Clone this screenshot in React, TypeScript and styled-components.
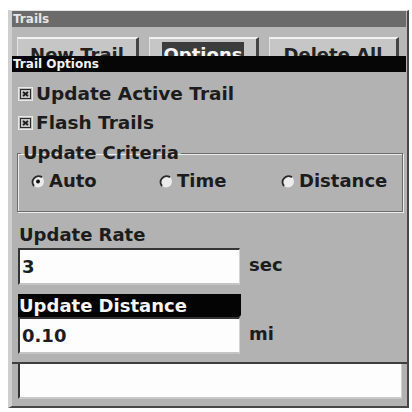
import React from 'react';
import styled, { createGlobalStyle } from 'styled-components';

const GlobalStyle = createGlobalStyle`
  body {
    margin: 0;
    background: #ffffff;
    font-family: "DejaVu Sans", "Liberation Sans", sans-serif;
  }
`;

const Dialog = styled.div`
  margin: 10px 0 0 8px;
  width: 401px;
  box-sizing: border-box;
  background: #b2b2b2;
  border-top: 1px solid #e4e4e4;
  border-left: 4px solid #cfcfcf;
  border-right: 2px solid #474747;
  border-bottom: 2px solid #474747;
  display: flex;
  flex-direction: column;
`;

const TitleBar = styled.div<{ $dark?: boolean }>`
  height: 16px;
  line-height: 16px;
  padding-left: 1px;
  margin-right: 1px;
  background: ${(p) => (p.$dark ? '#060606' : '#6b6b6b')};
  color: ${(p) => (p.$dark ? '#f2f2f2' : '#e6e6e6')};
  font-size: 12px;
  font-weight: bold;
`;

const ButtonRow = styled.div`
  height: 29px;
  box-sizing: border-box;
  padding: 10px 0 0 5px;
  overflow: hidden;
  display: flex;
  gap: 10px;
  background: #b8b8b8;
`;

const TabButton = styled.div<{ $w: number }>`
  width: ${(p) => p.$w}px;
  height: 34px;
  flex: none;
  box-sizing: border-box;
  padding-top: 3px;
  background: #c6c6c6;
  border-top: 2px solid #f2f2f2;
  border-left: 1px solid #e2e2e2;
  border-right: 3px solid #444444;
  text-align: center;
  font-size: 18px;
  font-weight: bold;
  line-height: 26px;
  color: #222222;
`;

const Selected = styled.span`
  display: inline-block;
  padding: 0 2px;
  background: #3c3c3c;
  color: #f4f4f4;
`;

const Body = styled.div`
  height: 290px;
  box-sizing: border-box;
  padding: 7px 5px 0 6px;
  display: flex;
  flex-direction: column;
  color: #1c1c1c;
  font-size: 18px;
  font-weight: bold;
`;

const CheckRow = styled.div`
  height: 29px;
  display: flex;
  align-items: center;
  gap: 3px;
  font-size: 18.5px;
`;

const Group = styled.fieldset`
  margin: 5px -1px 0 -1px;
  padding: 6px 0 19px 3px;
  min-width: 0;
  border: 1px solid #6c6c6c;
  box-shadow: inset 1px 1px 0 #ececec, 1px 1px 0 #ececec;
`;

const Legend = styled.legend`
  padding: 0 2px;
  line-height: 22px;
`;

const RadioRow = styled.div`
  display: grid;
  grid-template-columns: 128px 122px auto;
  padding-left: 9px;
`;

const RadioOption = styled.div`
  display: flex;
  align-items: center;
  gap: 3px;
  line-height: 22px;
`;

const Label = styled.div<{ $active?: boolean }>`
  width: 223px;
  box-sizing: border-box;
  margin-top: ${(p) => (p.$active ? 9 : 12)}px;
  padding-left: 1px;
  line-height: ${(p) => (p.$active ? 23 : 22)}px;
  background: ${(p) => (p.$active ? '#040404' : 'transparent')};
  color: ${(p) => (p.$active ? '#f6f6f6' : 'inherit')};
  border-radius: 0 0 3px 0;
`;

const FieldRow = styled.div<{ $gap?: number }>`
  margin-top: ${(p) => p.$gap ?? 0}px;
  display: flex;
  align-items: center;
`;

const Field = styled.div`
  width: 222px;
  height: 37px;
  box-sizing: border-box;
  padding-left: 2px;
  display: flex;
  align-items: center;
  background: #fdfdfd;
  border-top: 2px solid #343434;
  border-left: 2px solid #343434;
  border-bottom: 2px solid #c4c4c4;
  border-right: 1px solid #d4d4d4;
`;

const Unit = styled.span`
  margin-left: 9px;
  padding-bottom: 4px;
`;

const Footer = styled.div`
  border-top: 2px solid #3e3e3e;
  padding: 0 5px 7px 6px;
`;

const StatusBox = styled.div`
  height: 35px;
  box-sizing: border-box;
  background: #fdfdfd;
  border-left: 2px solid #333333;
  border-bottom: 2px solid #c8c8c8;
  border-right: 1px solid #d0d0d0;
`;

const CheckBox = () => (
  <svg width="15" height="14" viewBox="0 0 15 14">
    <rect x="0.5" y="0.5" width="14" height="13" fill="#bdbdbd" stroke="#e8e8e8" />
    <rect x="2.5" y="2.5" width="10" height="9" fill="#c2c2c2" stroke="#2a2a2a" />
    <path d="M5 5 L10 9 M10 5 L5 9" stroke="#1a1a1a" strokeWidth="1.8" />
  </svg>
);

const Radio = ({ on }: { on?: boolean }) => (
  <svg width="16" height="15" viewBox="0 0 16 15">
    <circle cx="8" cy="7.5" r="6" fill="#ececec" />
    <path d="M12 3.2 A6 6 0 0 0 4 12" fill="none" stroke="#2a2a2a" strokeWidth="2" />
    {on && <circle cx="8" cy="7.5" r="2" fill="#111111" />}
  </svg>
);

const App = () => {
  return (
    <>
      <GlobalStyle />
      <Dialog>
        <TitleBar>Trails</TitleBar>
        <ButtonRow>
          <TabButton $w={122}>New Trail</TabButton>
          <TabButton $w={110}>
            <Selected>Options</Selected>
          </TabButton>
          <TabButton $w={130}>Delete All</TabButton>
        </ButtonRow>
        <TitleBar $dark>Trail Options</TitleBar>
        <Body>
          <CheckRow>
            <CheckBox />
            Update Active Trail
          </CheckRow>
          <CheckRow>
            <CheckBox />
            Flash Trails
          </CheckRow>
          <Group>
            <Legend>Update Criteria</Legend>
            <RadioRow>
              <RadioOption>
                <Radio on />
                Auto
              </RadioOption>
              <RadioOption>
                <Radio />
                Time
              </RadioOption>
              <RadioOption>
                <Radio />
                Distance
              </RadioOption>
            </RadioRow>
          </Group>
          <Label>Update Rate</Label>
          <FieldRow $gap={2}>
            <Field>3</Field>
            <Unit>sec</Unit>
          </FieldRow>
          <Label $active>Update Distance</Label>
          <FieldRow>
            <Field>0.10</Field>
            <Unit>mi</Unit>
          </FieldRow>
        </Body>
        <Footer>
          <StatusBox />
        </Footer>
      </Dialog>
    </>
  );
};

export default App;
